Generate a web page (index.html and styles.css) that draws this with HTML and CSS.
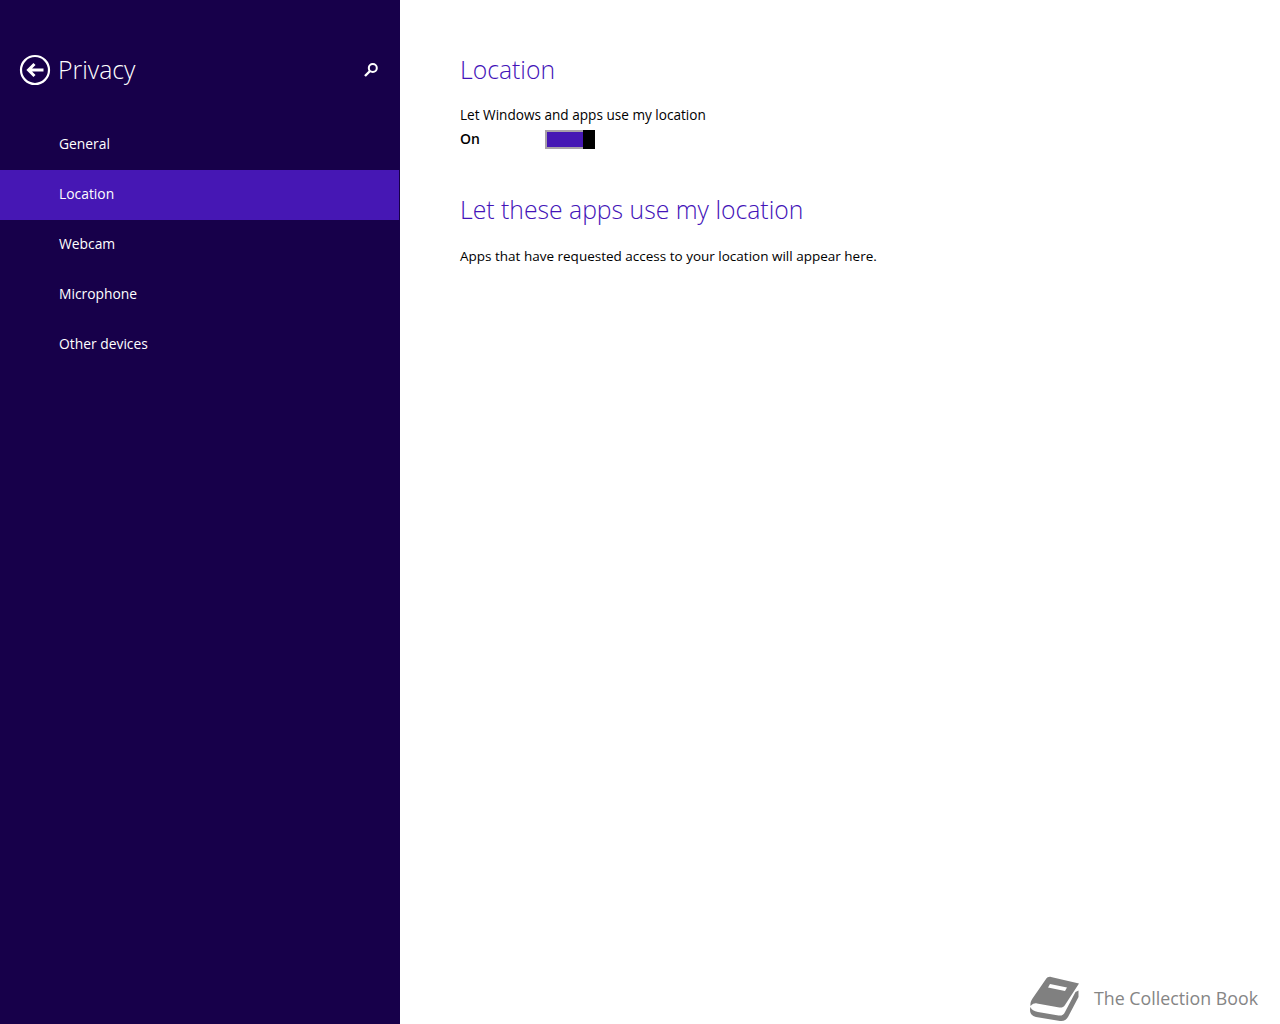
FILE: index.html
```html
<!DOCTYPE html>
<html lang="en">
<head>
    <meta charset="UTF-8">
    <meta name="viewport" content="width=device-width, initial-scale=1.0">
    <title>Privacy - Location</title>
    <link rel="stylesheet" href="styles.css">
</head>
<body>

<div class="settings">
    <!-- Left pane -->
    <nav class="sidebar">
        <div class="sidebar-header">
            <svg class="back-icon" width="32" height="32" viewBox="0 0 32 32" fill="none" stroke="#fff">
                <circle cx="16" cy="16" r="14" stroke-width="2.2"/>
                <path d="M24.5 16H10M15.5 10L9.5 16L15.5 22" stroke-width="3"/>
            </svg>
            <h1 class="sidebar-title">Privacy</h1>
            <svg class="search-icon" width="16" height="16" viewBox="0 0 16 16" fill="none" stroke="#fff">
                <circle cx="9.8" cy="6" r="4" stroke-width="2"/>
                <path d="M7 9L2 14" stroke-width="2.4"/>
            </svg>
        </div>
        <ul class="nav-list">
            <li class="nav-item">General</li>
            <li class="nav-item active">Location</li>
            <li class="nav-item">Webcam</li>
            <li class="nav-item">Microphone</li>
            <li class="nav-item">Other devices</li>
        </ul>
    </nav>

    <!-- Right pane -->
    <main class="content">
        <h2 class="section-title">Location</h2>
        <p class="setting-label">Let Windows and apps use my location</p>
        <div class="toggle-row">
            <span class="toggle-state">On</span>
            <span class="toggle"><span class="toggle-fill"></span><span class="toggle-thumb"></span></span>
        </div>
        <h2 class="section-title section-apps">Let these apps use my location</h2>
        <p class="setting-note">Apps that have requested access to your location will appear here.</p>
    </main>
</div>

<!-- Watermark -->
<div class="watermark">
    <svg class="book-icon" width="52" height="48" viewBox="0 0 52 48" fill="#808080">
        <path d="M23 3L51 9.5L37 31C35.500 33.500 33 34 30 33.300L9 29.500C7 29 5 29.500 2.500 32C2 29 3 27 4.500 24.500L18 5C19 3.500 21 2.500 23 3Z"/>
        <path d="M2.500 33C1 38 3 42 8 43L32 47C36 47.500 38 46 40 43L50.500 23V16.500L47.500 18L37 38C35.500 41 33.500 42 30.500 41.500L10 38C6 37.300 3.500 36 2.500 33Z"/>
        <path d="M22 10L39 13.500L37 17L20 13.500Z" fill="#fff"/>
    </svg>
    <span class="watermark-text">The Collection Book</span>
</div>

</body>
</html>
```

FILE: styles.css
```css
/* Page */
html, body {
    margin: 0;
    height: 100%;
    overflow: hidden;
}

body {
    background-color: #fff;
    color: #000;
    font-family: 'Open Sans', 'Noto Sans', sans-serif;
}

.settings {
    display: flex;
    height: 1024px;
}

/* Left pane */
.sidebar {
    width: 400px;
    flex-shrink: 0;
    background-color: #17004a;
    color: #fff;
}

.sidebar-header {
    display: flex;
    align-items: center;
    height: 40px;
    padding: 50px 21px 30px 19px;
}

.back-icon {
    flex-shrink: 0;
}

.sidebar-title {
    flex: 1;
    margin: 0 0 2px 7px;
    font-size: 24.8px;
    font-weight: 300;
}

.nav-list {
    margin: 0;
    padding: 0;
    list-style: none;
}

.nav-item {
    height: 50px;
    width: 340px;
    padding-left: 59px;
    line-height: 48px;
    font-size: 13.85px;
}

.nav-item.active {
    background-color: #4617b4;
}

/* Right pane */
.content {
    flex: 1;
    padding: 50px 0 0 60px;
}

.section-title {
    margin: 0;
    height: 40px;
    line-height: 40px;
    color: #4313b8;
    font-size: 24.75px;
    font-weight: 300;
}

.section-apps {
    margin-top: 41px;
}

.setting-label {
    margin: 15px 0 0;
    line-height: 20px;
    font-size: 13.6px;
}

.toggle-row {
    display: flex;
    align-items: center;
    height: 20px;
    margin-top: 4px;
}

.toggle-state {
    width: 85px;
    margin-bottom: 2px;
    font-size: 14px;
    font-weight: 600;
}

.toggle {
    display: flex;
    width: 50px;
    height: 19px;
}

.toggle-fill {
    flex: 1;
    border: 2px solid #a8a0a8;
    border-right: 0;
    background-color: #4617b4;
}

.toggle-thumb {
    width: 12px;
    background-color: #000;
}

.setting-note {
    margin: 16px 0 0;
    line-height: 20px;
    font-size: 13.5px;
}

/* Watermark sits over the page corner */
.watermark {
    position: absolute;
    right: 22px;
    bottom: 0;
    display: flex;
    align-items: center;
    gap: 14px;
    height: 52px;
    color: #858585;
    font-size: 17.8px;
}

.book-icon {
    flex-shrink: 0;
}
```
